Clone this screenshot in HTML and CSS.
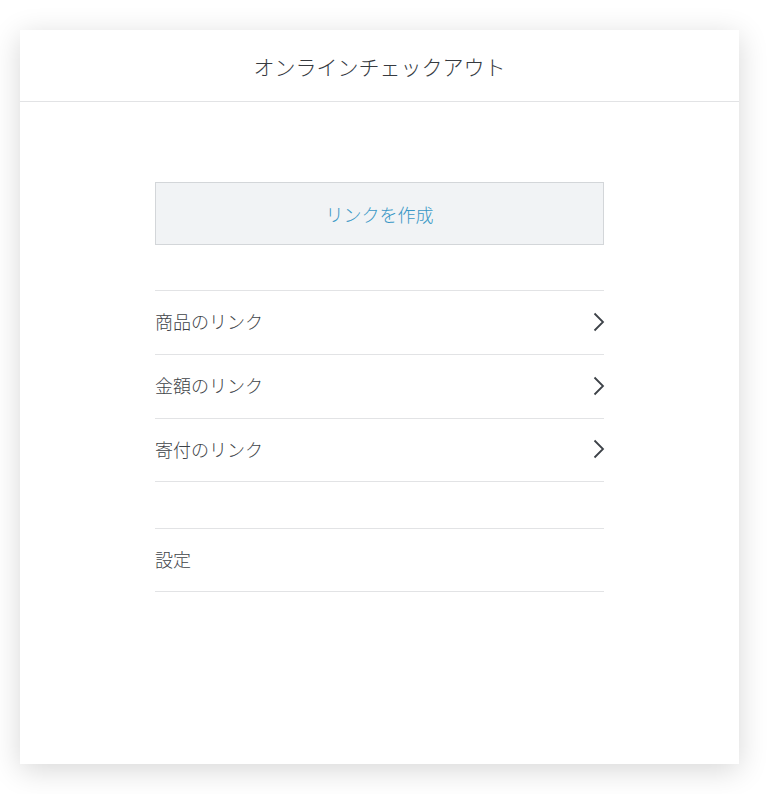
FILE: index.html
```html
<!DOCTYPE html>
<html lang="ja">
<head>
<meta charset="UTF-8">
<title>オンラインチェックアウト</title>
<link rel="stylesheet" href="styles.css">
</head>
<body>
<div class="card">
<div class="header">オンラインチェックアウト</div>
<div class="content">
<div class="create-btn">リンクを作成</div>

<ul class="menu">
<li><span>商品のリンク</span><svg class="chev" viewBox="0 0 12 20" width="12" height="20"><path d="M1.5 1.5 L10 10 L1.5 18.5" fill="none" stroke="#3d4248" stroke-width="1.8"/></svg></li>
<li><span>金額のリンク</span><svg class="chev" viewBox="0 0 12 20" width="12" height="20"><path d="M1.5 1.5 L10 10 L1.5 18.5" fill="none" stroke="#3d4248" stroke-width="1.8"/></svg></li>
<li><span>寄付のリンク</span><svg class="chev" viewBox="0 0 12 20" width="12" height="20"><path d="M1.5 1.5 L10 10 L1.5 18.5" fill="none" stroke="#3d4248" stroke-width="1.8"/></svg></li>
</ul>

<ul class="menu settings">
<li><span>設定</span></li>
</ul>
</div>
</div>
</body>
</html>
```

FILE: styles.css
```css
body {
margin: 0;
padding: 30px 0 30px 20px;
background: #fff;
font-family: "Noto Sans CJK JP", "Noto Sans", sans-serif;
font-weight: 300;
color: #3e4348;
}
.card {
width: 719px;
height: 734px;
background: #fff;
box-shadow: 0 6px 28px rgba(0,0,0,0.16);
}
.header {
height: 71px;
border-bottom: 1px solid #e2e3e5;
display: flex;
align-items: center;
justify-content: center;
font-size: 21px;
color: #363a3f;
}
.content {
width: 449px;
margin: 0 auto;
padding-top: 80px;
}
.create-btn {
height: 61px;
border: 1px solid #d3d6d9;
background: #f1f3f5;
color: #3a98c6;
font-size: 18px;
display: flex;
align-items: center;
justify-content: center;
}
.menu {
list-style: none;
margin: 45px 0 0 0;
padding: 0;
border-top: 1px solid #e2e3e5;
}
.menu li {
height: 60px;
padding-bottom: 3px;
border-bottom: 1px solid #e2e3e5;
display: flex;
align-items: center;
justify-content: space-between;
font-size: 18px;
}
.menu li:last-child {
height: 59px;
}
.chev {
margin-right: -1px;
margin-top: 1px;
}
.settings {
margin-top: 46px;
}
```
